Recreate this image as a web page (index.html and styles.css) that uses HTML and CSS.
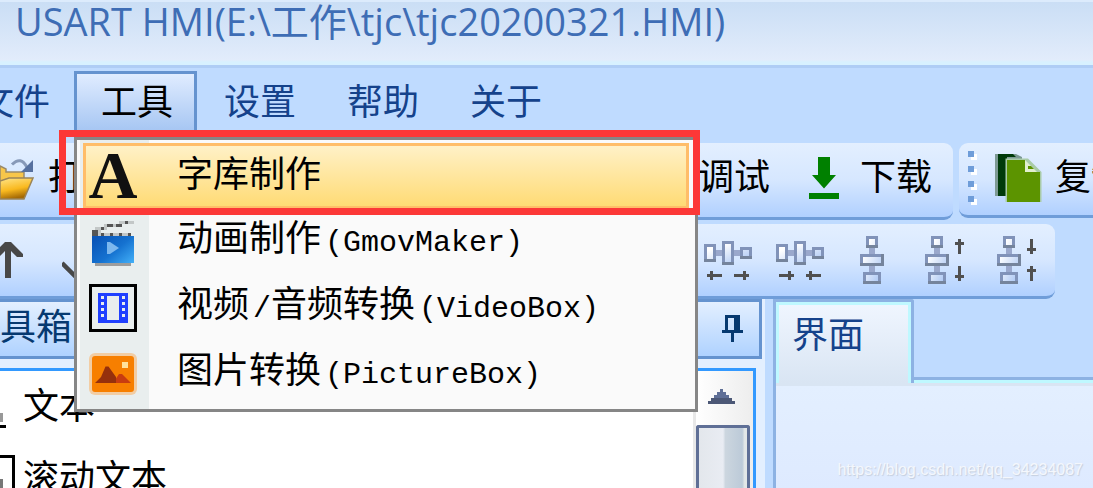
FILE: index.html
```html
<!DOCTYPE html>
<html lang="zh-CN">
<head>
    <meta charset="UTF-8">
    <meta name="viewport" content="width=device-width, initial-scale=1.0">
    <title>USART HMI</title>
    <link rel="stylesheet" href="styles.css">
</head>
<body>
    <!-- 公共图标 -->
    <svg class="symbols" width="0" height="0" aria-hidden="true">
        <defs>
            <linearGradient id="boxFill" x1="0" y1="0" x2="1" y2="1">
                <stop offset="0.2" stop-color="#ffffff"/>
                <stop offset="1" stop-color="#a9c5f3"/>
            </linearGradient>
            <linearGradient id="folderFill" x1="0" y1="0" x2="0.3" y2="1">
                <stop offset="0" stop-color="#ffe58a"/>
                <stop offset="0.6" stop-color="#f9b91f"/>
                <stop offset="1" stop-color="#a56a05"/>
            </linearGradient>
            <linearGradient id="clapFill" x1="0" y1="0.2" x2="1" y2="1">
                <stop offset="0" stop-color="#0a55b8"/>
                <stop offset="0.5" stop-color="#1572d0"/>
                <stop offset="1" stop-color="#43b0f8"/>
            </linearGradient>
            <symbol id="rowBoxes" viewBox="0 0 16 13">
                <path fill="#9aa8cc" d="M4 3h2v2H4zM10 3h2v2h-2z"/>
                <path fill="#8193b9" d="M0 1h4v6H0zM6 0h4v8H6zM12 2h4v4h-4z"/>
                <path fill="#75849c" d="M0 6h4v1H0zM6 7h4v1H6zM12 5h4v1h-4z"/>
                <path fill="url(#boxFill)" d="M1 2h2v4H1zM7 1h2v6H7zM13 3h2v2h-2z"/>
            </symbol>
            <symbol id="columnBoxes" viewBox="0 0 8 16">
                <path fill="#9aa8cc" d="M3 4h2v2H3zM3 10h2v2H3z"/>
                <path fill="#8193b9" d="M2 0h4v4H2zM0 6h8v4H0zM1 12h6v4H1z"/>
                <path fill="#75849c" d="M2 3h4v1H2zM0 9h8v1H0zM7 6h1v4H7zM1 15h6v1H1z"/>
                <path fill="url(#boxFill)" d="M3 1h2v2H3zM1 7h6v2H1zM2 13h4v2H2z"/>
            </symbol>
        </defs>
    </svg>

    <div class="app">
        <header class="title-bar">
            <h1>USART HMI(E:\工作\tjc\tjc20200321.HMI)</h1>
        </header>

        <nav class="menu-bar">
            <button class="menu-button first">文件</button>
            <div class="menu-item">
                <button class="menu-button open">工具</button>
                <div class="dropdown">
                    <button class="dropdown-item selected">
                        <svg class="item-icon" viewBox="0 0 48 48"><text class="letter-icon" x="24" y="46" text-anchor="middle">A</text></svg>
                        <span class="item-text">字库制作</span>
                    </button>
                    <button class="dropdown-item">
                        <svg class="item-icon" viewBox="0 0 16 16">
                            <path fill="#9d9d9d" d="M2 15h12v1H2z"/>
                            <rect x="1" y="6" width="14" height="9" fill="url(#clapFill)"/>
                            <path fill="#555" d="M1 4h2v2H1zM4 5h1v1H4zM7 5h1v1H7zM10 5h1v1h-1zM13 5h1v1h-1zM4 3h1v1H4zM6 2h2v1H6zM9 2h2v1H9zM12 1h1v1h-1z"/>
                            <path fill="#c3c7c7" d="M3 4h1v2H3zM5 5h2v1H5zM8 5h2v1H8zM11 5h2v1h-2zM2 3h2v1H2zM5 2h1v2H5zM8 2h1v1H8zM10 1h2v1h-2zM13 1h2v1h-2z"/>
                            <path fill="#7db8ee" d="M6 8h1l3 2-3 2H6z"/>
                        </svg>
                        <span class="item-text">动画制作<span class="latin">(GmovMaker)</span></span>
                    </button>
                    <button class="dropdown-item">
                        <svg class="item-icon" viewBox="0 0 16 16" shape-rendering="crispEdges">
                            <path fill="#000" fill-rule="evenodd" d="M0 0h16v16H0zM1 1v14h14V1z"/>
                            <path fill="#2040ff" fill-rule="evenodd" d="M3 3h10v10H3zM6 4v8h4V4z"/>
                            <path fill="#e9eeee" d="M4 4h1v1H4zM4 6h1v1H4zM4 8h1v1H4zM4 10h1v1H4zM11 4h1v1h-1zM11 6h1v1h-1zM11 8h1v1h-1zM11 10h1v1h-1z"/>
                        </svg>
                        <span class="item-text">视频<span class="latin">/</span>音频转换<span class="latin">(VideoBox)</span></span>
                    </button>
                    <button class="dropdown-item">
                        <svg class="item-icon" viewBox="0 0 16 16">
                            <rect x="0" y="1" width="16" height="14" rx="2" fill="#f2cda4"/>
                            <rect x="1" y="2" width="14" height="12" rx="1" fill="#f77f00"/>
                            <rect x="11" y="4" width="2" height="2" fill="#ffe09a"/>
                            <path fill="#c83c10" d="M8 11l2-3h1l3 3z"/>
                            <path fill="#96300c" d="M2 11l2-2 1.500-3.500h1L9 9v2z"/>
                        </svg>
                        <span class="item-text">图片转换<span class="latin">(PictureBox)</span></span>
                    </button>
                </div>
            </div>
            <button class="menu-button">设置</button>
            <button class="menu-button">帮助</button>
            <button class="menu-button">关于</button>
        </nav>

        <div class="toolbar-row">
            <div class="toolbar main-tools">
                <button class="tool-button">
                    <svg class="folder-icon" viewBox="0 0 12 16">
                        <path fill="#f8c64a" stroke="#9a8a6a" stroke-width="0.500" d="M0 4l2 1v1h6v3H0z"/>
                        <path fill="url(#folderFill)" stroke="#9a8458" stroke-width="0.500" d="M0 9l3-1h8L8 15H0z"/>
                        <path fill="none" stroke="#8799b8" d="M4 3.500q3-3 5 1"/>
                        <path fill="#56709f" d="M11 2v4H7z"/>
                    </svg>
                    <span>打开</span>
                </button>
                <span class="spacer"></span>
                <button class="tool-button">调试</button>
                <button class="tool-button">
                    <svg class="tool-icon" viewBox="0 0 16 16">
                        <path fill="#008000" d="M6 1h4v6h2l-4 4.500L4 7h2zM3 13h10v2H3z"/>
                    </svg>
                    <span>下载</span>
                </button>
            </div>
            <div class="toolbar edit-tools">
                <svg class="grip" viewBox="0 0 3 18" shape-rendering="crispEdges">
                    <path fill="#fff" d="M1 1h2v2H1zM1 6h2v2H1zM1 11h2v2H1zM1 16h2v2H1z"/>
                    <path fill="#6f9dd9" d="M0 0h2v2H0zM0 5h2v2H0zM0 10h2v2H0zM0 15h2v2H0z"/>
                </svg>
                <button class="tool-button">
                    <svg class="tool-icon" viewBox="0 0 16 16">
                        <path fill="#7d9a94" d="M0 0h7l2 1v1H4v12H0z"/>
                        <path fill="#003a0a" d="M1 0h5l1 1H4v13H1z"/>
                        <path fill="#a9cba8" d="M3.500 1.500H11L15.500 6v10h-12z"/>
                        <path fill="#5c9400" d="M4 2h6v4h5v10H4z"/>
                        <path fill="#e2efcf" d="M10 2l4 4h-4z"/>
                        <path fill="#5c9400" d="M11 4h1l1 1h-2z"/>
                    </svg>
                    <span>复制</span>
                </button>
            </div>
        </div>

        <div class="toolbar-row">
            <div class="toolbar align-tools">
                <button class="align-button leading" aria-label="上移">
                    <svg class="arrow-icon" viewBox="0 0 11 12"><path fill="#484848" d="M5 0h2l4 4v1H9L7 3v9H5V3L3 5H1V4z"/></svg>
                </button>
                <button class="align-button" aria-label="确定">
                    <svg class="arrow-icon" viewBox="0 0 11 12"><path fill="none" stroke="#484848" stroke-width="1.500" d="M0 7l4 4 6-8"/></svg>
                </button>
                <span class="spacer"></span>
                <button class="align-button" aria-label="增大水平间距">
                    <svg width="48" height="39" viewBox="0 0 16 13" shape-rendering="crispEdges">
                        <use href="#rowBoxes" width="16" height="13"/>
                        <path fill="#505050" d="M1 11h5v1H1zM2 10h1v3H2zM10 11h5v1h-5zM13 10h1v3h-1z"/>
                    </svg>
                </button>
                <button class="align-button" aria-label="减小水平间距">
                    <svg width="48" height="39" viewBox="0 0 16 13" shape-rendering="crispEdges">
                        <use href="#rowBoxes" width="16" height="13"/>
                        <path fill="#505050" d="M1 11h5v1H1zM4 10h1v3H4zM10 11h5v1h-5zM11 10h1v3h-1z"/>
                    </svg>
                </button>
                <button class="align-button" aria-label="垂直等距">
                    <svg width="24" height="48" viewBox="0 0 8 16" shape-rendering="crispEdges">
                        <use href="#columnBoxes" width="8" height="16"/>
                    </svg>
                </button>
                <button class="align-button" aria-label="增大垂直间距">
                    <svg width="39" height="48" viewBox="0 0 13 16" shape-rendering="crispEdges">
                        <use href="#columnBoxes" width="8" height="16"/>
                        <path fill="#505050" d="M11 1h1v5h-1zM10 2h3v1h-3zM11 10h1v5h-1zM10 13h3v1h-3z"/>
                    </svg>
                </button>
                <button class="align-button" aria-label="减小垂直间距">
                    <svg width="39" height="48" viewBox="0 0 13 16" shape-rendering="crispEdges">
                        <use href="#columnBoxes" width="8" height="16"/>
                        <path fill="#505050" d="M11 1h1v5h-1zM10 4h3v1h-3zM11 10h1v5h-1zM10 11h3v1h-3z"/>
                    </svg>
                </button>
            </div>
        </div>

        <main class="workspace">
            <section class="toolbox">
                <header class="toolbox-header">
                    <h2>工具箱</h2>
                    <button class="pin-button" aria-label="固定">
                        <svg width="21" height="27" viewBox="0 0 7 9" shape-rendering="crispEdges">
                            <path fill="#063970" fill-rule="evenodd" d="M1 0h5v5h1v1H4v3H3V6H0V5h1zM2 1v4h2V1z"/>
                        </svg>
                    </button>
                </header>
                <div class="toolbox-body">
                    <ul class="widget-list">
                        <li>
                            <svg class="widget-icon" viewBox="0 0 5 16" shape-rendering="crispEdges">
                                <path fill="#999" d="M0 10h1v3H0z"/>
                                <path fill="#000" d="M0 14h2v1H0z"/>
                            </svg>
                            <span>文本</span>
                        </li>
                        <li>
                            <svg class="widget-icon" viewBox="0 0 5 16" shape-rendering="crispEdges">
                                <path fill="#000" d="M0 0h5v16H4V1H0z"/>
                                <path fill="#777" d="M0 8h1v4H0z"/>
                            </svg>
                            <span>滚动文本</span>
                        </li>
                    </ul>
                    <div class="scroll-track">
                        <button class="scroll-up" aria-label="向上滚动">
                            <svg width="27" height="15" viewBox="0 0 9 5" shape-rendering="crispEdges">
                                <path fill="#5f6f96" d="M4 0h1v1H4zM3 1h3v1H3zM2 2h5v1H2z"/>
                                <path fill="#4c5876" d="M1 3h7v1H1zM0 4h9v1H0z"/>
                            </svg>
                        </button>
                        <div class="scroll-thumb"></div>
                    </div>
                </div>
            </section>

            <section class="editor">
                <div class="tab-strip">
                    <button class="tab">界面</button>
                    <div class="tab-rest"></div>
                </div>
                <div class="canvas">
                    <span class="watermark">https://blog.csdn.net/qq_34234087</span>
                </div>
            </section>
        </main>
    </div>
</body>
</html>
```

FILE: styles.css
```css
* {
    margin: 0;
    padding: 0;
    box-sizing: border-box;
}

body {
    font-family: "Liberation Sans", "Noto Sans CJK SC", sans-serif;
    font-size: 36px;
    line-height: 36px;
    color: #000;
    background: #bfdbff;
    overflow: hidden;
}

button {
    font: inherit;
    color: inherit;
    background: none;
    border: none;
    white-space: nowrap;
}

svg {
    display: block;
    flex-shrink: 0;
}

.symbols {
    position: absolute;
}

.app {
    height: 100vh;
    display: flex;
    flex-direction: column;
}

/* 标题栏 */
.title-bar {
    height: 68px;
    flex-shrink: 0;
    padding: 0 15px;
    border-top: 2px solid #dcebfc;
    border-bottom: 3px solid #afcdf5;
    background: linear-gradient(#cadef5, #e2ecfb 58px, #d8f1ff 60px);
}

.title-bar h1 {
    font-family: "Open Sans", "Noto Sans CJK SC", sans-serif;
    font-size: 38px;
    line-height: 38px;
    font-weight: 400;
    color: #3e6db5;
    white-space: nowrap;
}

/* 菜单栏 */
.menu-bar {
    display: flex;
    height: 75px;
    flex-shrink: 0;
    padding-top: 3px;
    color: #15428b;
}

.menu-item {
    position: relative;
}

.menu-button {
    height: 66px;
    padding: 0 21px 2px 24px;
    border: 3px solid transparent;
    flex-shrink: 0;
}

.menu-button.first {
    margin-left: -49px;
}

.menu-button.open {
    display: block;
    color: #000;
    border-color: #6593cf;
    background: linear-gradient(#e0ecff, #a3c4f2);
}

.dropdown {
    position: absolute;
    z-index: 10;
    top: 66px;
    left: 0;
    width: 624px;
    padding: 3px 6px 2px;
    border: 3px solid #868686;
    background: linear-gradient(90deg, #fafafa 3px, #e9eeee 3px, #e9eeee 72px, #fafafa 72px);
    color: #000;
}

.dropdown-item {
    display: flex;
    align-items: center;
    gap: 40px;
    width: 100%;
    height: 66px;
    padding: 0 3px;
    border: 3px solid transparent;
    text-align: left;
}

.dropdown-item.selected {
    position: relative;
    border-color: #ffbd69;
    background: linear-gradient(#fff1c7, #ffdb75);
}

.dropdown-item.selected::after {
    content: "";
    position: absolute;
    top: -16px;
    right: -14px;
    bottom: -9px;
    left: -27px;
    border: 7px solid #fc3837;
}

.item-icon {
    width: 48px;
    height: 48px;
}

.item-text {
    padding-bottom: 2px;
}

.letter-icon {
    font-family: "Liberation Serif", serif;
    font-size: 68px;
    font-weight: 700;
    fill: #111;
}

.latin {
    margin-left: 4px;
    font-family: "Liberation Mono", monospace;
    font-size: 30px;
}

/* 工具栏 */
.toolbar-row {
    display: flex;
    align-items: flex-start;
    flex-shrink: 0;
    gap: 6px;
    padding-bottom: 4px;
}

.toolbar-row + .toolbar-row {
    padding: 0 38px 0 0;
}

.toolbar {
    display: flex;
    align-items: center;
    border-bottom: 3px solid #6f9dd9;
    background: linear-gradient(#e3efff, #d6e7ff 50%, #b0d0ff);
}

.main-tools {
    flex: 1;
    height: 77px;
    gap: 30px;
    padding: 0 21px 5px 0;
    border-radius: 0 9px 9px 0;
}

.edit-tools {
    width: 134px;
    height: 75px;
    gap: 18px;
    padding: 0 0 3px 9px;
    border-radius: 9px 0 0 9px;
    overflow: hidden;
}

.align-tools {
    flex: 1;
    height: 75px;
    padding-right: 3px;
    border-radius: 0 9px 9px 0;
}

.spacer {
    flex: 1;
}

.tool-button {
    display: flex;
    align-items: center;
    gap: 12px;
}

.tool-icon {
    width: 48px;
    height: 48px;
}

.folder-icon {
    width: 36px;
    height: 48px;
}

.grip {
    width: 9px;
    height: 54px;
}

.align-button {
    display: flex;
    align-items: center;
    justify-content: center;
    width: 72px;
    height: 72px;
}

.align-button.leading {
    margin-left: -30px;
}

.arrow-icon {
    width: 33px;
    height: 36px;
}

/* 工作区 */
.workspace {
    display: flex;
    flex: 1;
    min-height: 0;
}

.toolbox {
    display: flex;
    flex-direction: column;
    flex: 0 0 70%;
    min-width: 0;
    background: #e3efff;
}

.toolbox-header {
    display: flex;
    align-items: center;
    justify-content: space-between;
    height: 60px;
    margin-right: 3px;
    padding: 0 16px 2px 0;
    border: 3px solid #6593cf;
    border-left: none;
    background: linear-gradient(#e3efff, #afd2ff);
    color: #063970;
}

.toolbox-header h2 {
    margin-left: -36px;
    font-size: 36px;
    font-weight: 400;
    white-space: nowrap;
}

.toolbox-body {
    display: flex;
    flex: 1;
    min-height: 0;
    margin: 9px 9px 0 0;
    border: 3px solid #3399ff;
    border-left: none;
    border-bottom: none;
    background: #fff;
    overflow: hidden;
}

.widget-list {
    flex: 1;
    list-style: none;
}

.widget-list li {
    display: flex;
    align-items: center;
    gap: 8px;
    height: 72px;
}

.widget-icon {
    width: 15px;
    height: 48px;
}

.scroll-track {
    display: flex;
    flex-direction: column;
    width: 60px;
    padding: 0 3px 0 0;
    border-left: 3px solid #e8e8e8;
    background: linear-gradient(90deg, #fff, #ededed);
}

.scroll-up {
    display: flex;
    align-items: center;
    justify-content: center;
    height: 54px;
    padding: 0 3px 3px 0;
    flex-shrink: 0;
}

.scroll-thumb {
    flex: 1;
    border: 3px solid #5f6f96;
    border-bottom: none;
    border-radius: 3px 3px 0 0;
    background: linear-gradient(90deg, #e3e7ec, #e9ecf3 50%, #ccd6df 55%, #bccad8 90%, #e3e7e7 95%);
}

.editor {
    display: flex;
    flex-direction: column;
    flex: 1;
    min-width: 0;
    margin-left: 8px;
    border-left: 3px solid #8db2e3;
}

.tab-strip {
    display: flex;
    align-items: stretch;
    height: 84px;
    flex-shrink: 0;
}

.tab {
    width: 138px;
    padding: 0 0 14px 16px;
    border-top: 3px solid #8db2e3;
    border-right: 3px solid #8db2e3;
    border-radius: 0 3px 0 0;
    background: linear-gradient(#f0f6ff, #d9e5f3);
    box-shadow: inset 3px 3px #bff8ff, inset -3px 0 #bff8ff;
    color: #15428b;
    text-align: left;
}

.tab-rest {
    flex: 1;
    margin-top: 78px;
    border-top: 3px solid #8db2e3;
    border-bottom: 3px solid #bff8ff;
}

.canvas {
    display: flex;
    flex: 1;
    align-items: flex-end;
    justify-content: flex-end;
    padding: 0 10px 8px;
    border-top: 3px solid #d9e5f3;
    background: linear-gradient(#e3efff, #deeaff);
}

.watermark {
    font-size: 16px;
    line-height: 20px;
    color: #f4f7fc;
    text-shadow: 1px 1px 1px #c4cedd;
}
```
